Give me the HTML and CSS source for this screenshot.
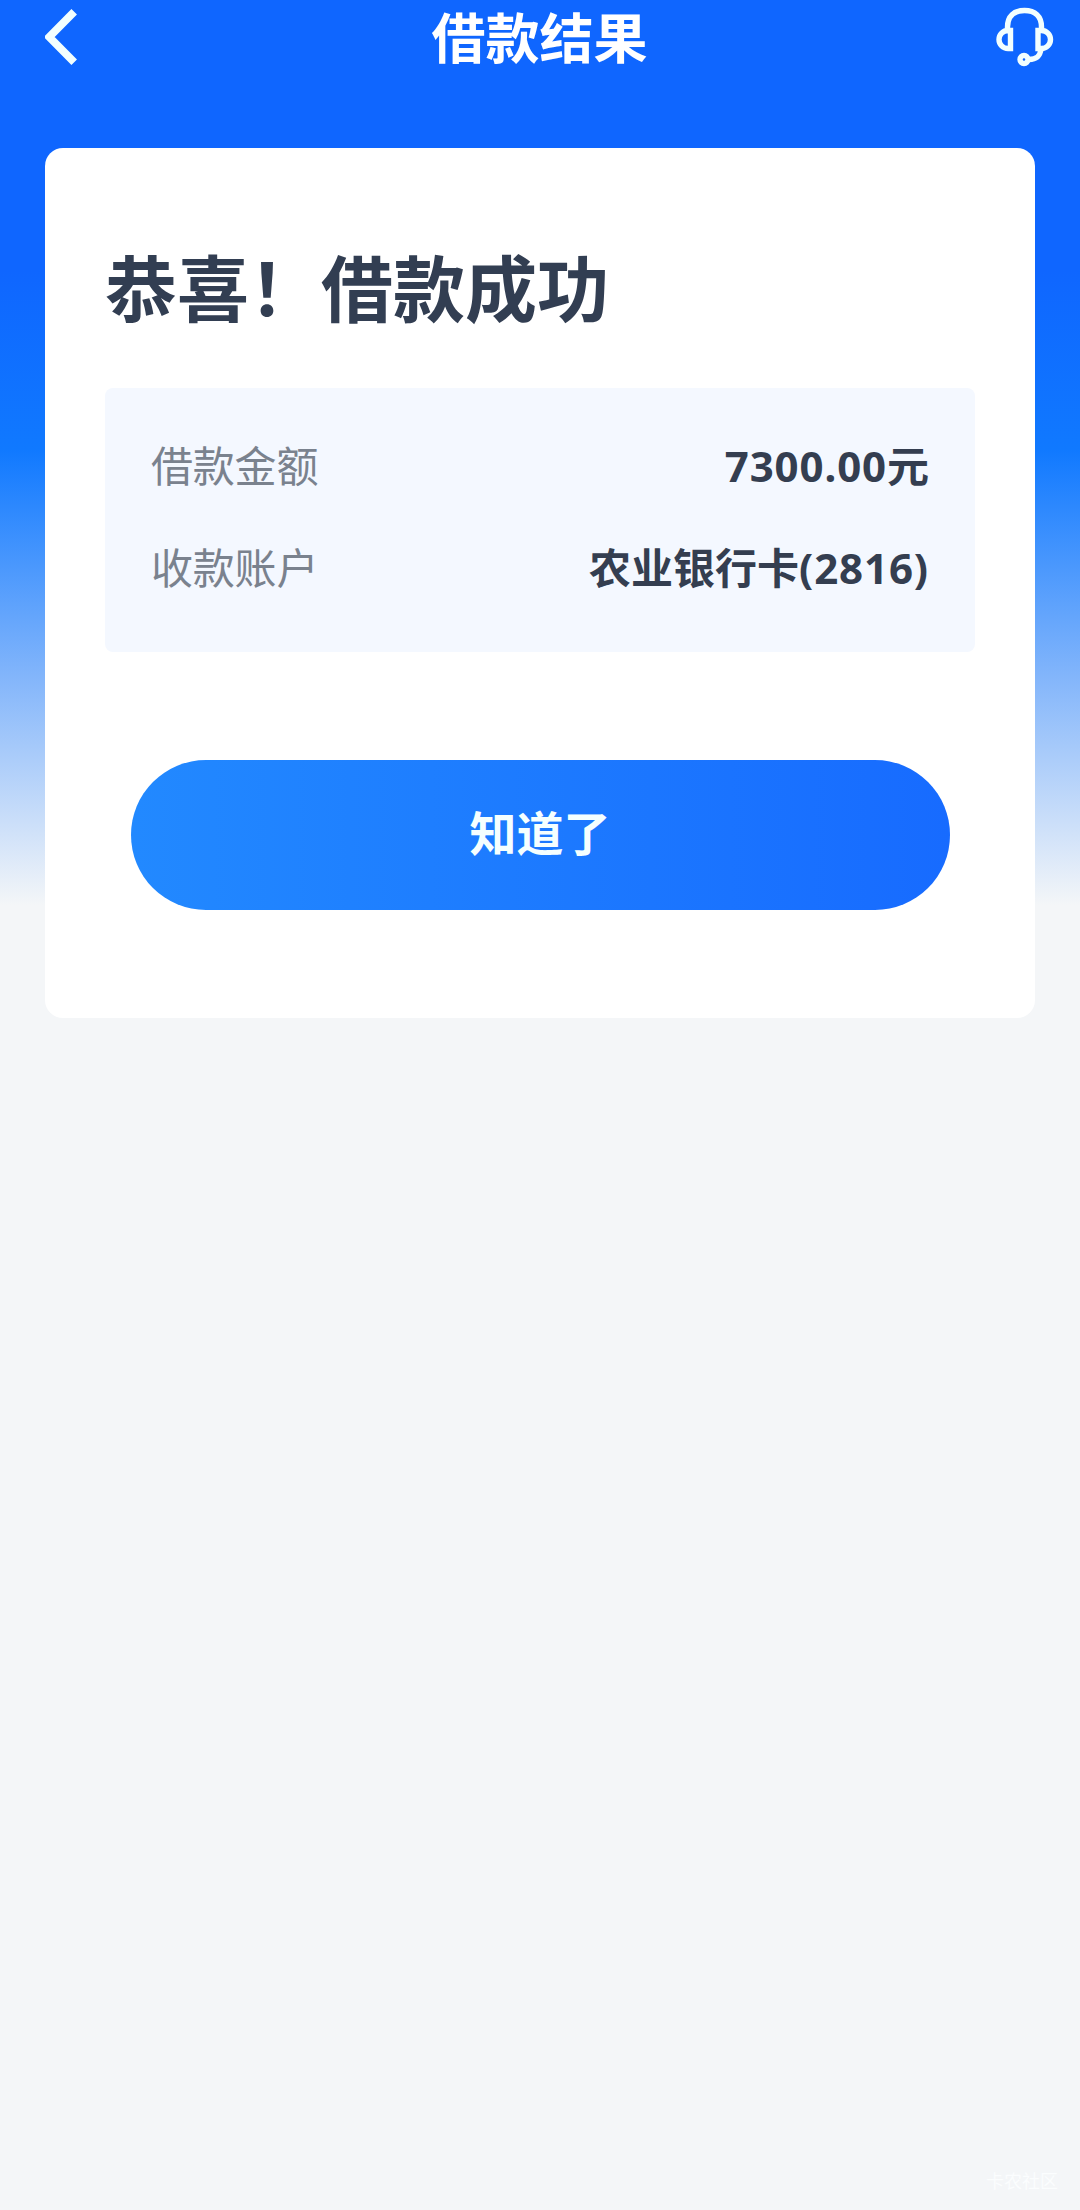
FILE: index.html
```
<!DOCTYPE html>
<html lang="zh-CN">
<head>
    <meta charset="UTF-8">
    <meta name="viewport" content="width=device-width, initial-scale=1.0">
    <title>借款结果</title>
    <link rel="stylesheet" href="styles.css">
</head>
<body>
    <div class="page">
        <header class="navbar">
            <a class="back" href="#" aria-label="返回">
                <svg width="32" height="56" viewBox="0 0 32 56">
                    <path d="M29.2 2.8 L4.2 28 L29.2 53.2" fill="none" stroke="currentColor" stroke-width="7.8"/>
                </svg>
            </a>
            <h1 class="navbar-title">借款结果</h1>
            <a class="service" href="#" aria-label="客服">
                <svg width="58" height="60" viewBox="0 0 58 60" fill="none" stroke="currentColor" stroke-width="5.4">
                    <path d="M11.5 23 V20 C11.5 9 18 3.5 28.5 3.5 S45.5 9 45.5 20 V23"/>
                    <path d="M14.5 23.5 V41.5 H12 A9 9 0 0 1 12 23.5 Z"/>
                    <path d="M42 23.5 V41.5 H45.5 A9 9 0 0 0 45.5 23.5 Z"/>
                    <path d="M45 42 C44 49.5 40.5 52.5 33 52.5"/>
                    <circle cx="28" cy="52.5" r="4"/>
                </svg>
            </a>
        </header>

        <main class="card">
            <h2 class="card-title">恭喜！借款成功</h2>
            <div class="info">
                <div class="info-row">
                    <span class="label">借款金额</span>
                    <span class="value"><span class="num">7300.00</span>元</span>
                </div>
                <div class="info-row">
                    <span class="label">收款账户</span>
                    <span class="value">农业银行卡<span class="num">(2816)</span></span>
                </div>
            </div>
            <button class="confirm-btn" type="button">知道了</button>
        </main>

        <footer class="watermark">卡农社区</footer>
    </div>
</body>
</html>
```
FILE: styles.css
```
* {
    box-sizing: border-box;
    -webkit-tap-highlight-color: transparent;
}
body {
    margin: 0;
    font-family: "Noto Sans CJK SC", sans-serif;
    background-color: #f4f6f8;
}
.page {
    display: flex;
    flex-direction: column;
    min-height: 2210px;
    background: linear-gradient(180deg, #0f66ff 0, #0f66ff 270px, #1079ff 450px, #82b5fb 676px, #f4f6f8 905px);
}

/* Шапка */
.navbar {
    display: flex;
    justify-content: space-between;
    align-items: center;
    height: 74px;
    padding: 0 26px 0 45px;
    color: #fff;
}
.back,
.service {
    display: flex;
    width: 60px;
    color: #f2ffff;
}
.service {
    width: 58px;
}
.navbar-title {
    margin: 0;
    padding: 0 22px 2px 0;
    font-size: 54px;
    line-height: 72px;
    font-weight: bold;
}

/* Карточка */
.card {
    display: flex;
    flex-direction: column;
    height: 870px;
    margin: 74px 45px 0;
    padding: 87px 60px 0;
    background-color: #fff;
    border-radius: 18px;
}
.card-title {
    margin: 0 0 53px;
    color: #323e52;
    font-size: 72px;
    line-height: 100px;
    font-weight: bold;
}
.info {
    height: 264px;
    padding: 24px 46px 0;
    background-color: #f4f8ff;
    border-radius: 8px;
}
.info-row {
    display: flex;
    justify-content: space-between;
    align-items: center;
    height: 102px;
    font-size: 42px;
}
.label {
    color: #7a828e;
    letter-spacing: -0.2px;
}
.value {
    color: #343e50;
    font-weight: bold;
}
.num {
    font-family: "Noto Sans", sans-serif;
    letter-spacing: 0.9px;
}
.confirm-btn {
    height: 150px;
    margin: 108px 25px 0 26px;
    padding: 0 1px 10px 0;
    border: none;
    border-radius: 75px;
    background: linear-gradient(90deg, #2289ff, #176bff);
    color: #f5ffff;
    font-family: inherit;
    font-size: 47px;
    font-weight: bold;
    cursor: pointer;
}
.watermark {
    margin: auto 22px 18px auto;
    color: #fbfdfe;
    font-size: 18px;
    line-height: 24px;
}
```
